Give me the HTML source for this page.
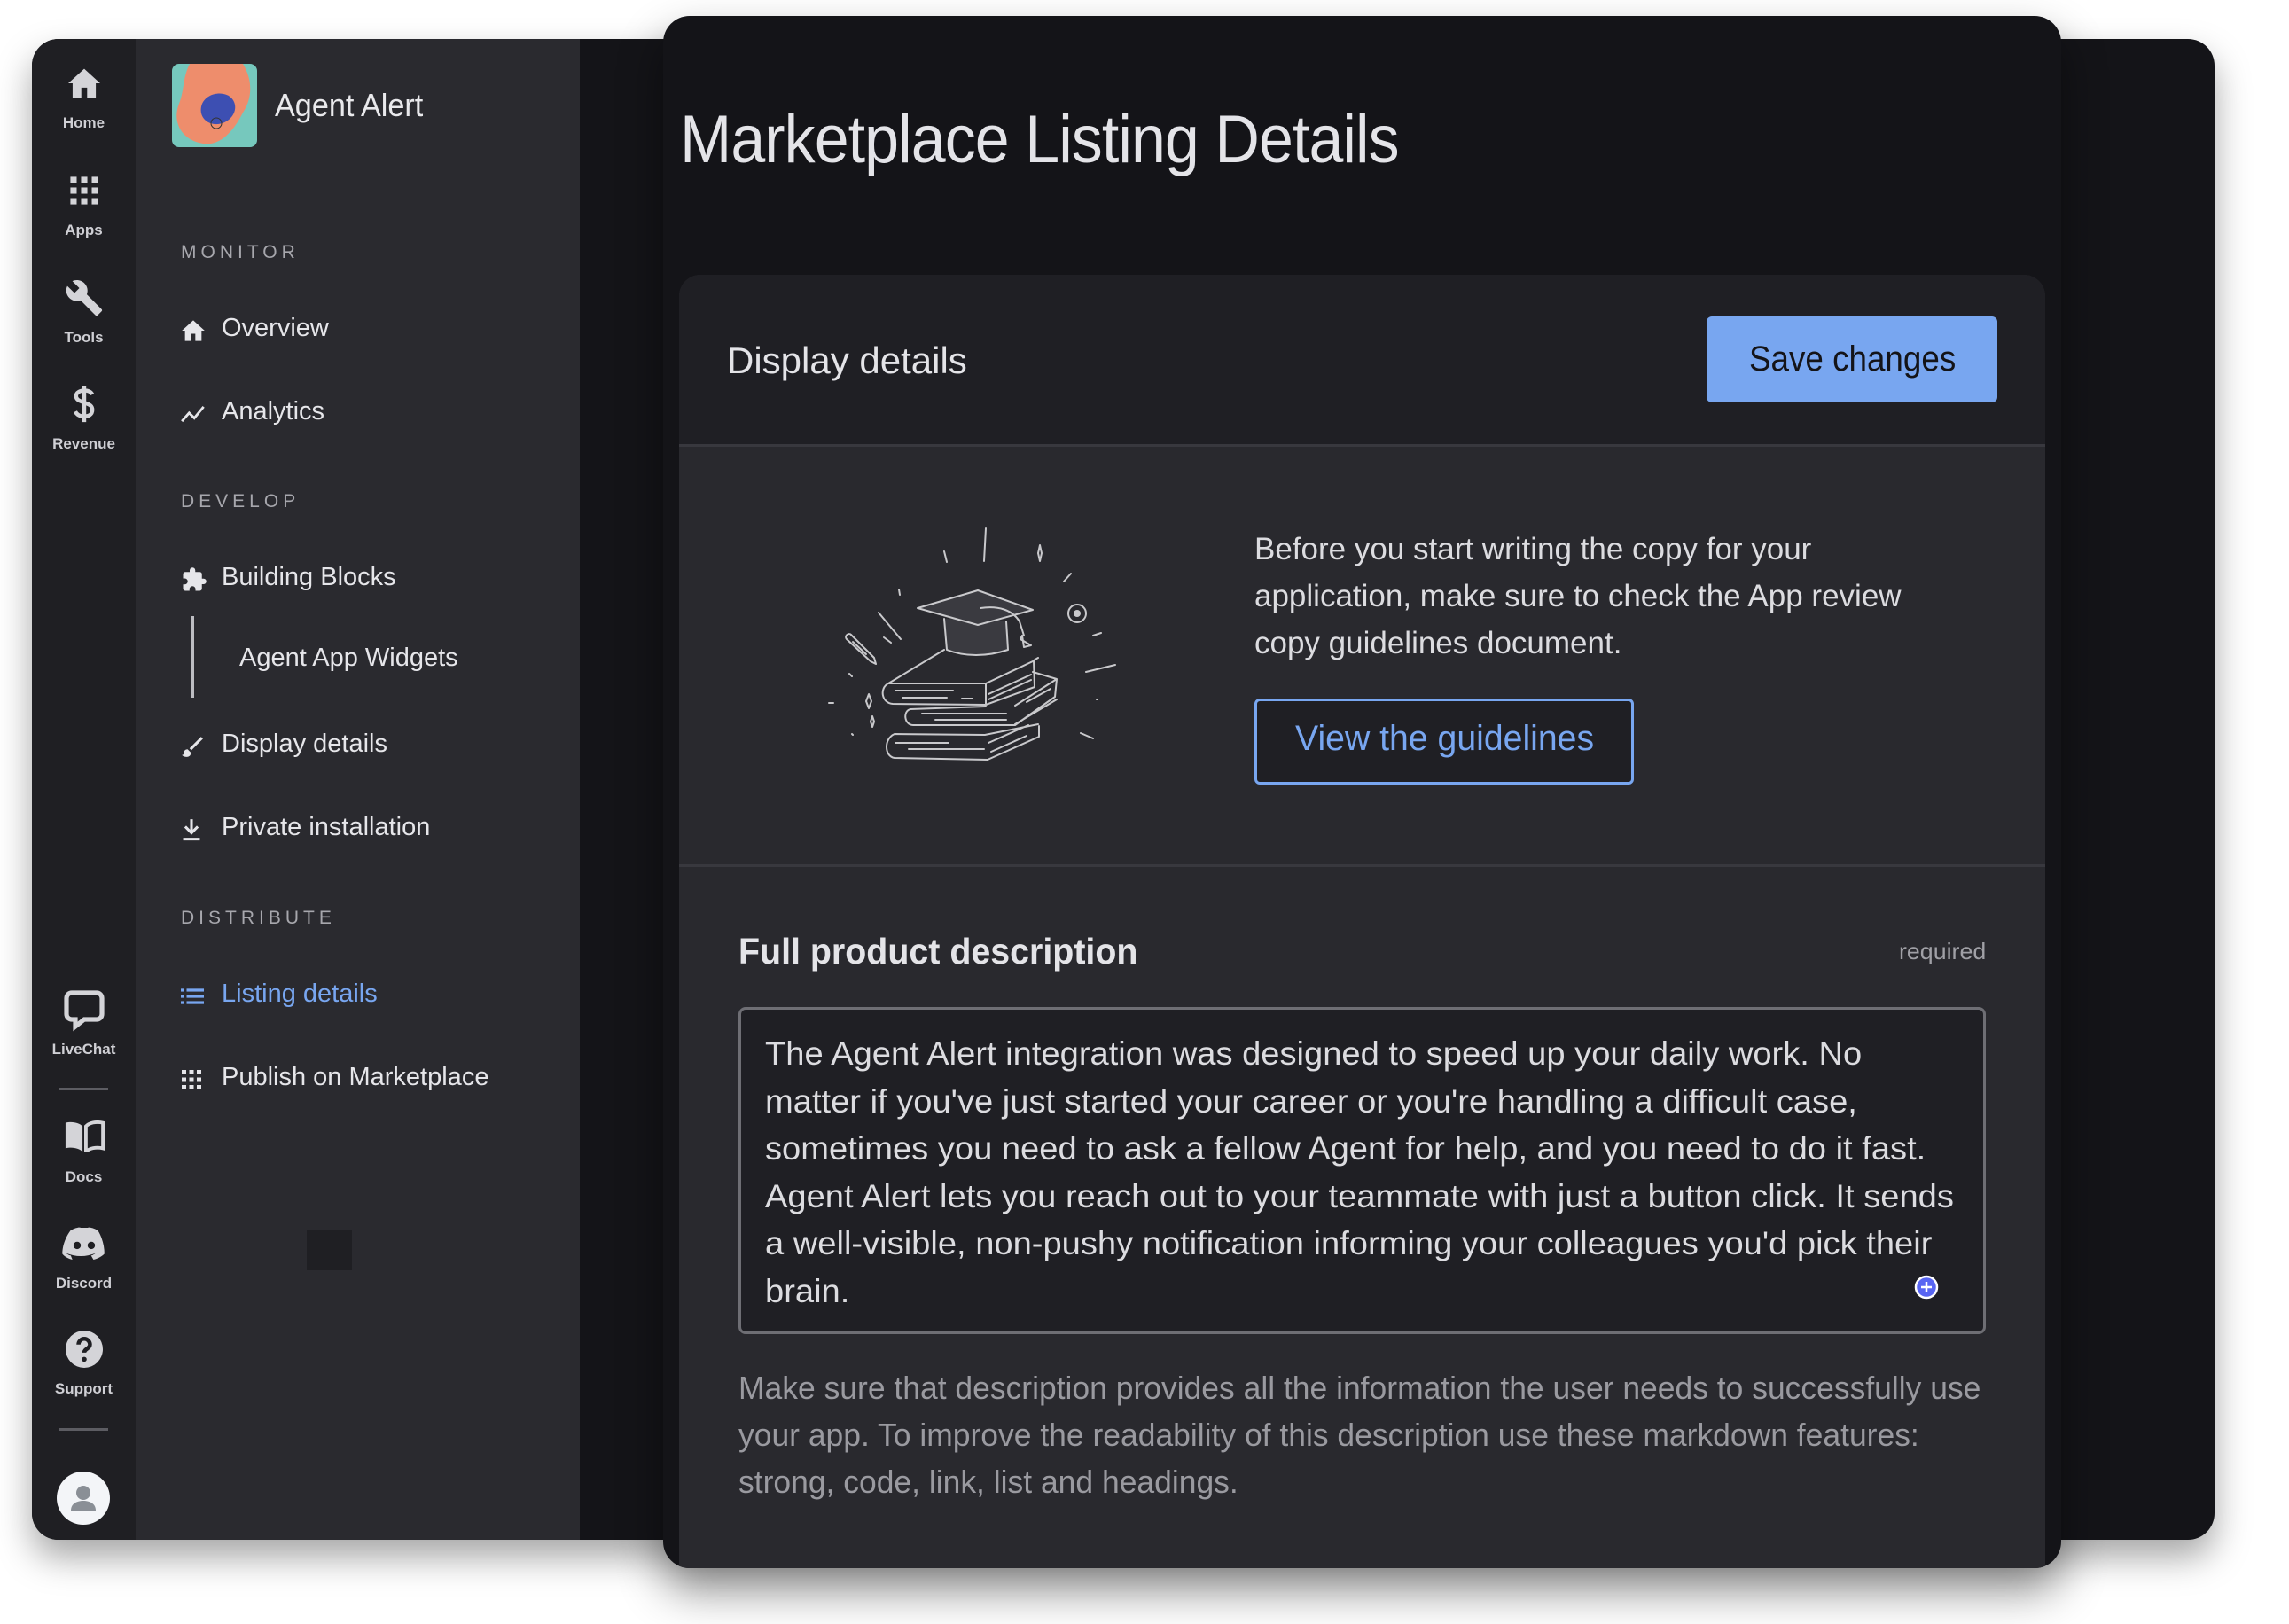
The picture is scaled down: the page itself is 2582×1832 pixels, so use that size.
<!DOCTYPE html>
<html><head><meta charset="utf-8">
<style>
*{margin:0;padding:0;box-sizing:border-box}
body{width:2582px;height:1832px;background:#fff;position:relative;overflow:hidden;font-family:"Liberation Sans",sans-serif}
.abs{position:absolute}
.t{position:absolute;white-space:nowrap;transform-origin:left center;transform:scaleX(.86)}
.back{left:36px;top:44px;width:2462px;height:1693px;background:#141418;border-radius:30px;overflow:hidden;box-shadow:0 20px 40px rgba(0,0,0,.35)}
.rail{left:0;top:0;width:117px;height:100%;background:#1f1f23}
.side{left:117px;top:0;width:501px;height:100%;background:#2a2a2f}
.front{left:748px;top:18px;width:1577px;height:1751px;background:#141418;border-radius:30px;box-shadow:0 25px 50px rgba(0,0,0,.45);overflow:hidden}
.lab{position:absolute;width:117px;text-align:center;color:#cfcfd4;font-size:17px;font-weight:bold;left:0}
.ico{position:absolute;left:0;width:117px;display:flex;justify-content:center}
.sec{position:absolute;left:51px;color:#a7a7ad;font-size:21px;letter-spacing:5px}
.nav{position:absolute;left:51px;color:#e6e6ea;font-size:29px;white-space:nowrap}
.nav svg{position:absolute;left:0;top:50%;transform:translateY(-50%)}
.nav span{position:absolute;left:46px;top:0;display:inline-block;transform-origin:left center;transform:scaleX(1)}
</style></head><body>
<div class="abs back">
 <div class="abs rail">
  <div class="ico" style="top:32px"><svg width="40" height="36" viewBox="0 0 24 22"><path d="M12 1L1 11h3v10h6v-7h4v7h6V11h3z" fill="#d4d4d8"/></svg></div>
  <div class="lab" style="top:85px">Home</div>
  <div class="ico" style="top:154px"><svg width="34" height="34" viewBox="0 0 24 24" fill="#d4d4d8"><rect x="1" y="1" width="5" height="5"/><rect x="9.5" y="1" width="5" height="5"/><rect x="18" y="1" width="5" height="5"/><rect x="1" y="9.5" width="5" height="5"/><rect x="9.5" y="9.5" width="5" height="5"/><rect x="18" y="9.5" width="5" height="5"/><rect x="1" y="18" width="5" height="5"/><rect x="9.5" y="18" width="5" height="5"/><rect x="18" y="18" width="5" height="5"/></svg></div>
  <div class="lab" style="top:206px">Apps</div>
  <div class="ico" style="top:270px"><svg width="44" height="44" viewBox="0 0 24 24"><path d="M22.7 19l-9.1-9.1c.9-2.3.4-5-1.5-6.9-2-2-5-2.4-7.4-1.3L9 6 6 9 1.6 4.7C.4 7.1.9 10.1 2.9 12.1c1.9 1.9 4.6 2.4 6.9 1.5l9.1 9.1c.4.4 1 .4 1.4 0l2.3-2.3c.5-.4.5-1.1.1-1.4z" fill="#d4d4d8"/></svg></div>
  <div class="lab" style="top:327px">Tools</div>
  <div class="ico" style="top:390px"><svg width="30" height="44" viewBox="0 0 16 24"><path d="M8 1v22M13 6c-1-2-3-2.5-5-2.5S3 4.5 3 7s2.5 3 5 4 5 1.5 5 4.5-2.5 4-5 4-4.5-1-5.5-3" stroke="#d4d4d8" stroke-width="2.4" fill="none"/></svg></div>
  <div class="lab" style="top:447px">Revenue</div>
  <div class="ico" style="top:1072px"><svg width="48" height="48" viewBox="0 0 24 24"><path d="M5 2h14a3 3 0 013 3v9a3 3 0 01-3 3h-7l-5 4v-4H5a3 3 0 01-3-3V5a3 3 0 013-3z" fill="none" stroke="#d4d4d8" stroke-width="2.6"/></svg></div>
  <div class="lab" style="top:1130px">LiveChat</div>
  <div class="abs" style="left:30px;top:1183px;width:56px;height:3px;background:#5c5c62"></div>
  <div class="ico" style="top:1220px"><svg width="46" height="36" viewBox="0 0 24 18"><path d="M1 1c4-1 8 0 10 2v15C9 16 5 15 1 16z" fill="#d4d4d8"/><path d="M13 3c2-2 6-3 10-2v15c-4-1-8 0-10 2z" fill="none" stroke="#d4d4d8" stroke-width="2"/></svg></div>
  <div class="lab" style="top:1274px">Docs</div>
  <div class="ico" style="top:1340px"><svg width="50" height="38" viewBox="0 0 26 20"><path d="M5 2c3-1.5 5-2 6-1.5h4c1-.5 3 0 6 1.5 2.5 4 4 9 4 14-2 2-4.5 3-6.5 3.5l-1.5-2.5c1 0 2-1 3-1.5-6 2.5-12 2.5-18 0 1 .5 2 1.5 3 1.5L6 19.5C4 19 1.5 18 0 16 0 11 2 6 5 2z" fill="#d4d4d8"/><circle cx="8.8" cy="11" r="2.2" fill="#1f1f23"/><circle cx="17.2" cy="11" r="2.2" fill="#1f1f23"/></svg></div>
  <div class="lab" style="top:1394px">Discord</div>
  <div class="ico" style="top:1457px"><svg width="42" height="42" viewBox="0 0 24 24"><circle cx="12" cy="12" r="12" fill="#d4d4d8"/><path d="M8.3 9a3.7 3.7 0 017.4 0c0 2.6-3.7 2.8-3.7 5.2" stroke="#1f1f23" stroke-width="2.6" fill="none"/><circle cx="12" cy="18.5" r="1.6" fill="#1f1f23"/></svg></div>
  <div class="lab" style="top:1513px">Support</div>
  <div class="abs" style="left:30px;top:1567px;width:56px;height:3px;background:#5c5c62"></div>
  <div class="abs" style="left:28px;top:1616px;width:60px;height:60px;border-radius:50%;background:#f3f5f8;overflow:hidden"><svg width="60" height="60" viewBox="0 0 60 60"><circle cx="30" cy="24" r="8" fill="#8a8f96"/><path d="M16 44c0-8 7-11 14-11s14 3 14 11z" fill="#8a8f96"/></svg></div>
 </div>
 <div class="abs side">
  <div class="abs" style="left:41px;top:28px;width:96px;height:94px;border-radius:8px;background:#76c8bd;overflow:hidden"><svg width="96" height="94" viewBox="0 0 96 94"><path d="M20 0h60c12 20 10 40 0 55-10 20-25 38-45 35C10 86 0 65 8 45 14 30 12 15 20 0z" fill="#ee8d6c"/><path d="M34 45c6-14 30-16 36-2 5 12-6 24-18 25-14 1-23-10-18-23z" fill="#3d4fb2"/><circle cx="50" cy="67" r="6" fill="none" stroke="#333" stroke-width="1"/></svg></div>
  <div class="t" style="left:157px;top:54px;font-size:36px;color:#e9e9ec;transform:scaleX(.95)">Agent Alert</div>
  <div class="sec" style="top:229px">MONITOR</div>
  <div class="nav" style="top:310px;height:38px"><svg width="28" height="26" viewBox="0 0 24 22"><path d="M12 1L1 11h3v10h6v-7h4v7h6V11h3z" fill="#e6e6ea"/></svg><span>Overview</span></div>
  <div class="nav" style="top:404px;height:38px"><svg width="28" height="22" viewBox="0 0 24 18"><path d="M1 16l7-8 5 5 9-11" stroke="#e6e6ea" stroke-width="2.4" fill="none"/></svg><span>Analytics</span></div>
  <div class="sec" style="top:510px">DEVELOP</div>
  <div class="nav" style="top:591px;height:38px"><svg width="30" height="30" viewBox="0 0 24 24"><path d="M20.5 11H19V7a2 2 0 00-2-2h-4V3.5a2.5 2.5 0 00-5 0V5H4a2 2 0 00-2 2v3.8h1.5a2.7 2.7 0 010 5.4H2V20a2 2 0 002 2h3.8v-1.5a2.7 2.7 0 015.4 0V22H17a2 2 0 002-2v-4h1.5a2.5 2.5 0 000-5z" fill="#e6e6ea"/></svg><span>Building Blocks</span></div>
  <div class="abs" style="left:63px;top:651px;width:3px;height:92px;background:#bdbdc2"></div>
  <div class="nav" style="left:117px;top:682px;height:38px"><span style="left:0">Agent App Widgets</span></div>
  <div class="nav" style="top:779px;height:38px"><svg width="26" height="26" viewBox="0 0 24 24"><path d="M21 2L9 14l2 2L23 4zM7 15c-2 0-4 1.5-4 4 0 1.5-1 2-2 2 1.5 1.5 3.5 2 5 2 3 0 4.5-2 4.5-4.5z" fill="#e6e6ea"/></svg><span>Display details</span></div>
  <div class="nav" style="top:873px;height:38px"><svg width="24" height="26" viewBox="0 0 20 22"><path d="M10 1v12M4 8l6 6 6-6M2 20h16" stroke="#e6e6ea" stroke-width="2.6" fill="none"/></svg><span>Private installation</span></div>
  <div class="sec" style="top:980px">DISTRIBUTE</div>
  <div class="nav" style="top:1061px;height:38px;color:#78a6f0"><svg width="26" height="20" viewBox="0 0 24 18"><g fill="#78a6f0"><rect x="0" y="1" width="3" height="3"/><rect x="6" y="1" width="18" height="3"/><rect x="0" y="7.5" width="3" height="3"/><rect x="6" y="7.5" width="18" height="3"/><rect x="0" y="14" width="3" height="3"/><rect x="6" y="14" width="18" height="3"/></g></svg><span>Listing details</span></div>
  <div class="nav" style="top:1155px;height:38px"><svg width="24" height="24" viewBox="0 0 24 24" fill="#e6e6ea"><rect x="1" y="1" width="5" height="5"/><rect x="9.5" y="1" width="5" height="5"/><rect x="18" y="1" width="5" height="5"/><rect x="1" y="9.5" width="5" height="5"/><rect x="9.5" y="9.5" width="5" height="5"/><rect x="18" y="9.5" width="5" height="5"/><rect x="1" y="18" width="5" height="5"/><rect x="9.5" y="18" width="5" height="5"/><rect x="18" y="18" width="5" height="5"/></svg><span>Publish on Marketplace</span></div>
  <div class="abs" style="left:193px;top:1344px;width:51px;height:45px;background:#1f1f23"></div>
 </div>
</div>

<div class="abs front">
 <div class="t" style="left:19px;top:96px;font-size:76px;color:#e4e4e8;letter-spacing:-1px;transform:scaleX(.92)">Marketplace Listing Details</div>
 <div class="abs" style="left:18px;top:292px;width:1541px;height:1500px;background:#29292e;border-radius:24px 24px 0 0;overflow:hidden">
  <div class="abs" style="left:0;top:0;width:100%;height:194px;background:#1f1f24;border-bottom:3px solid #38383e"></div>
  <div class="t" style="left:54px;top:73px;font-size:42px;color:#e4e4e8;transform:scaleX(1)">Display details</div>
  <div class="abs" style="left:1159px;top:47px;width:328px;height:97px;background:#78a6f0;border-radius:6px"></div>
  <div class="t" style="left:1207px;top:73px;font-size:40px;color:#141418;transform:scaleX(.92)">Save changes</div>
  <svg class="abs" style="left:134px;top:251px" width="400" height="320" viewBox="0 0 400 320" fill="none" stroke="#c9c9cc" stroke-width="2" stroke-linecap="round" stroke-linejoin="round">
   <path d="M212 35l-2 37M165 61l3 12M300 95l8-9M275 63l-2 9-2-9 2-9zM114 104l1 6M91 130l25 30M97 158l8 6M342 153l-9 3M325 197l33-8M40 232h-5M319 266l14 6M58 199l3 3M61 267l1 1M337 228h1"/>
   <circle cx="315" cy="131" r="10"/><circle cx="315" cy="131" r="3" fill="#c9c9cc"/>
   <path d="M77 230l3 8 3-8-3-8zM82 253l2 6 2-6-2-6z"/>
   <path d="M55 160l27 25 6 3-2-7-26-26c-3-3-8 2-5 5zM62 163l15 14"/>
   <path d="M165 137l3 35c20 8 45 8 69 0l-2-32" fill="#3a3a40"/>
   <path d="M135 125l68-20 62 22-62 17z" fill="#3a3a40"/>
   <path d="M206 125c20-3 36 2 44 15l5 16M253 156l-2 4 12 7-8 2z"/>
   <path d="M165 172l-63 38c-10 5-8 22 5 23l105 1 55-20-1-30 5-3"/>
   <path d="M212 233l0-23-110 0M212 210l53-25M215 222l48-22M215 228l48-22M110 218h65M118 226h50M185 227h12"/>
   <path d="M265 197l27 8-2 20-45 32H130c-10 0-12-16-3-18l85-3M292 205l-47 30M292 228l-47 28M258 231l27-15M140 244h95M155 251h80"/>
   <path d="M272 258v12l-58 26-105-2c-12-2-12-22 0-27l102 1 60-12M110 277h60M125 284h85M215 277l45-20M218 287l40-18"/>
  </svg>
  <div class="t" style="left:649px;top:283px;font-size:35px;line-height:53px;color:#dcdce0;transform:scaleX(1)">Before you start writing the copy for your<br>application, make sure to check the App review<br>copy guidelines document.</div>
  <div class="abs" style="left:649px;top:478px;width:428px;height:97px;border:3px solid #78a6f0;border-radius:6px;background:#1f1f24"></div>
  <div class="t" style="left:695px;top:501px;font-size:40px;color:#78a6f0;transform:scaleX(.98)">View the guidelines</div>
  <div class="abs" style="left:0;top:665px;width:100%;height:3px;background:#38383e"></div>
  <div class="t" style="left:67px;top:740px;font-size:41px;color:#e4e4e8;font-weight:bold;transform:scaleX(.96)">Full product description</div>
  <div class="t" style="left:1376px;top:748px;font-size:26px;color:#a0a0a6;transform:scaleX(1.03)">required</div>
  <div class="abs" style="left:67px;top:826px;width:1407px;height:369px;border:3px solid #6e6e74;border-radius:8px;background:#1f1f24"></div>
  <div class="t" style="left:97px;top:852px;font-size:37px;line-height:53.6px;color:#dcdce0;transform:scaleX(1.03)">The Agent Alert integration was designed to speed up your daily work. No<br>matter if you've just started your career or you're handling a difficult case,<br>sometimes you need to ask a fellow Agent for help, and you need to do it fast.<br>Agent Alert lets you reach out to your teammate with just a button click. It sends<br>a well-visible, non-pushy notification informing your colleagues you'd pick their<br>brain.</div>
  <svg class="abs" style="left:1392px;top:1127px" width="30" height="30" viewBox="0 0 30 30"><circle cx="15" cy="15" r="12" fill="#5865f2" stroke="#fff" stroke-width="2.5"/><path d="M15 9v12M9 15h12" stroke="#fff" stroke-width="2.5"/></svg>
  <div class="t" style="left:67px;top:1229px;font-size:36px;line-height:53px;color:#9a9aa0;transform:scaleX(.985)">Make sure that description provides all the information the user needs to successfully use<br>your app. To improve the readability of this description use these markdown features:<br>strong, code, link, list and headings.</div>
 </div>
</div>
</body></html>
